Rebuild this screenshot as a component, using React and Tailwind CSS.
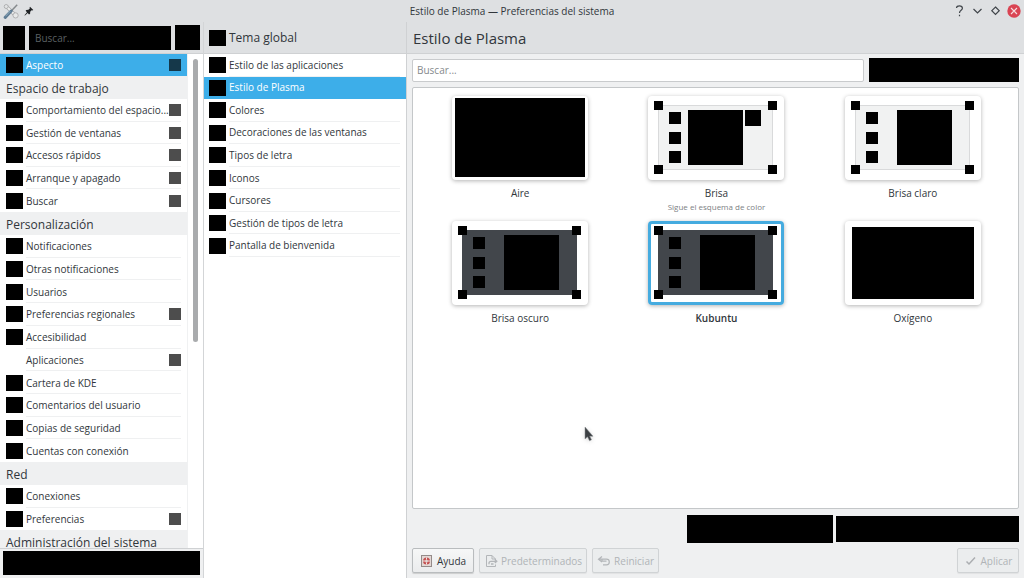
import React from "react";

const sections = [
  {
    title: "Espacio de trabajo",
    height: "h-[113px]",
    items: [
      { label: "Comportamiento del espacio...", more: true },
      { label: "Gestión de ventanas", more: true },
      { label: "Accesos rápidos", more: true },
      { label: "Arranque y apagado", more: true },
      { label: "Buscar", more: true },
    ],
  },
  {
    title: "Personalización",
    height: "h-[227px]",
    items: [
      { label: "Notificaciones" },
      { label: "Otras notificaciones" },
      { label: "Usuarios" },
      { label: "Preferencias regionales", more: true },
      { label: "Accesibilidad" },
      { label: "Aplicaciones", more: true, noIcon: true },
      { label: "Cartera de KDE" },
      { label: "Comentarios del usuario" },
      { label: "Copias de seguridad" },
      { label: "Cuentas con conexión" },
    ],
  },
  {
    title: "Red",
    height: "h-[45px]",
    items: [{ label: "Conexiones" }, { label: "Preferencias", more: true }],
  },
  { title: "Administración del sistema", height: "h-0", items: [] },
];

const pages = [
  "Estilo de las aplicaciones",
  "Estilo de Plasma",
  "Colores",
  "Decoraciones de las ventanas",
  "Tipos de letra",
  "Iconos",
  "Cursores",
  "Gestión de tipos de letra",
  "Pantalla de bienvenida",
];

const themes = [
  { name: "Aire", kind: "full" },
  { name: "Brisa", note: "Sigue el esquema de color", kind: "light", panelX: 40, clock: true },
  { name: "Brisa claro", kind: "light", panelX: 52 },
  { name: "Brisa oscuro", kind: "dark", panelX: 52 },
  { name: "Kubuntu", kind: "dark", panelX: 52, selected: true },
  { name: "Oxígeno", kind: "inset" },
];

function ItemButton({ label, more, noIcon, selected, last }) {
  return (
    <button
      type="button"
      className={`flex h-full w-full items-center pl-[6px] text-left ${
        selected ? "bg-[#3daee9] text-white" : "text-[#31363b]"
      }`}
    >
      <span className={`h-4 w-[17px] shrink-0 ${noIcon ? "" : "bg-black"}`} />
      <span
        className={`ml-[3px] mr-[6px] flex h-full min-w-0 flex-1 items-center border-b pt-px ${
          selected || last ? "border-transparent" : "border-[#eff0f1]"
        }`}
      >
        <span className="min-w-0 flex-1 whitespace-nowrap">{label}</span>
        {more && <span className={`size-3 shrink-0 ${selected ? "bg-[#15384a]" : "bg-[#4d4d4d]"}`} />}
      </span>
    </button>
  );
}

function Preview({ kind, panelX, clock }) {
  const dark = kind === "dark";
  return (
    <svg viewBox="0 0 136 84" className="block h-[84px] w-[136px]" shapeRendering="crispEdges" aria-hidden="true">
      {kind === "full" && <rect x="3" y="2" width="130" height="79" />}
      {kind === "inset" && <rect x="7" y="6" width="122" height="72" />}
      {(dark || kind === "light") && (
        <>
          <rect
            x="10.5"
            y="9.5"
            width="114"
            height="64"
            fill={dark ? "#42464b" : "#f1f2f2"}
            stroke={dark ? "#42464b" : "#d9dadb"}
          />
          <rect x="6" y="5" width="9" height="9" />
          <rect x="120" y="5" width="9" height="9" />
          <rect x="6" y="69" width="9" height="9" />
          <rect x="120" y="69" width="9" height="9" />
          <rect x="21" y="16" width="12" height="12" />
          <rect x="21" y="36" width="12" height="12" />
          <rect x="21" y="55" width="12" height="12" />
          <rect x={panelX} y="14" width="55" height="55" />
          {clock && <rect x="97" y="14" width="16" height="16" />}
        </>
      )}
    </svg>
  );
}

function ThemeCard({ name, note, selected, ...preview }) {
  return (
    <button type="button" aria-pressed={!!selected} className="flex h-[125px] flex-col items-center">
      <span
        className={`rounded-[4px] bg-white ${
          selected
            ? "shadow-[inset_0_0_0_3px_#45abdf,0_1px_4px_rgba(0,0,0,0.3)]"
            : "shadow-[0_1px_4px_rgba(0,0,0,0.3)]"
        }`}
      >
        <Preview {...preview} />
      </span>
      <span className={`mt-[5px] leading-4 ${selected ? "font-semibold" : ""}`}>{name}</span>
      {note && <span className="text-[8px] leading-3 text-[#7d8184]">{note}</span>}
    </button>
  );
}

function ActionButton({ icon, children, disabled }) {
  return (
    <button
      type="button"
      disabled={disabled}
      className={`flex h-[25px] min-w-[62px] items-center justify-center gap-[3px] rounded-[2px] border px-1 ${
        disabled
          ? "border-[#d0d3d5] bg-[#ebedee] text-[#b0b4b7] shadow-[0_1px_1px_rgba(0,0,0,0.06)]"
          : "border-[#b9bcbe] bg-linear-to-b from-[#f6f7f7] to-[#ebeced] shadow-[0_1px_1px_rgba(0,0,0,0.15)]"
      }`}
    >
      {icon}
      {children}
    </button>
  );
}

const HelpIcon = (
  <svg viewBox="0 0 14 14" className="size-[14px]" aria-hidden="true">
    <rect x="1.5" y="1.5" width="10" height="11" fill="#e3d8d5" stroke="#948b89" />
    <circle cx="6.5" cy="7" r="2.5" fill="none" stroke="#c45050" strokeWidth="2" />
    <path d="M6.500 3.500v2M6.500 8.500v2M3 7h2M8 7h2" stroke="#f3e8e6" strokeWidth="1" />
  </svg>
);
const DefaultsIcon = (
  <svg viewBox="0 0 14 14" className="size-[14px]" fill="none" stroke="#b3b6b9" aria-hidden="true">
    <path d="M5 12.500H2.500v-11h5.500l3.500 3.500v1M8 1.500V5h3.500M5 12.500h6.500v-2" />
    <path d="M5 10.200V9.300a2 2 0 0 1 2-2h5.500M10.800 5.500l2 1.800-2 1.800M7 10h2.500" strokeWidth="1.3" />
  </svg>
);
const UndoIcon = (
  <svg viewBox="0 0 14 14" className="size-[14px]" fill="none" stroke="#b3b6b9" strokeWidth="1.2" aria-hidden="true">
    <path d="M5 2.500 1.500 5.200 5 8M2 5.200h7.500a2.800 2.800 0 0 1 0 5.600H6M5 5.200v2h4.500" />
  </svg>
);
const CheckIcon = (
  <svg viewBox="0 0 14 14" className="size-[14px]" fill="none" stroke="#abaeb1" strokeWidth="1.5" aria-hidden="true">
    <path d="m2.500 7.500 2.500 2.500 6-6.500" />
  </svg>
);

function TitleBar() {
  return (
    <header className="grid h-[22px] shrink-0 grid-cols-[1fr_auto_1fr] items-center pl-[3px] pr-[3px]">
      <div className="flex items-center gap-[5px]">
        <svg viewBox="0 0 16 16" className="size-4" aria-hidden="true">
          <path d="m3.500 3.500 9 9" stroke="#a4a6a7" strokeWidth="3.4" strokeLinecap="round" />
          <path d="m3.500 3.500 9 9" stroke="#eceded" strokeWidth="2" strokeLinecap="round" />
          <circle cx="3.2" cy="3.5" r="2" fill="#e1e3e4" stroke="#a4a6a7" strokeWidth=".8" />
          <circle cx="12.6" cy="12.4" r="2.6" fill="#e8e9e9" stroke="#a4a6a7" strokeWidth=".8" />
          <path d="M14.200 1.800 8 8.300" stroke="#85898c" strokeWidth="1.5" />
          <path d="m8.200 8-6 6.400" stroke="#5e7b93" strokeWidth="3" strokeLinecap="round" />
          <path d="m7.300 8.200-4.800 5" stroke="#9db7c8" strokeWidth=".8" />
        </svg>
        <svg viewBox="0 0 10 10" className="size-[10px]" aria-hidden="true">
          <path
            d="M6 .8 9.300 4l-1 .4-.8-.1-1.300 1.500-.1 2L5 8.400 3.700 7 1 9.400.5 9.500l.2-.6L3 6.200 1.600 4.800l.8-.8 2-.2 1.400-1.300-.2-1z"
            fill="#202326"
          />
        </svg>
      </div>
      <h1 className="leading-4">Estilo de Plasma — Preferencias del sistema</h1>
      <div className="flex items-center justify-end gap-1 text-[#40454a]">
        <button type="button" aria-label="Ayuda contextual">
          <svg viewBox="0 0 14 14" className="size-[14px]" fill="none" stroke="currentColor" strokeWidth="1.2">
            <path d="M3.500 4C3.500 2.500 4.700 1.800 6.400 1.800s3 .8 3 2.500C9.400 6.400 6.500 6.300 6.500 9M6.500 10.800v1.400" />
          </svg>
        </button>
        <button type="button" aria-label="Minimizar">
          <svg viewBox="0 0 14 14" className="size-[14px]" fill="none" stroke="currentColor" strokeWidth="1.2">
            <path d="m2.500 5 4 4 4-4" />
          </svg>
        </button>
        <button type="button" aria-label="Restaurar">
          <svg viewBox="0 0 14 14" className="size-[14px]" fill="none" stroke="currentColor" strokeWidth="1.2">
            <path d="m6.500 3 3.700 3.700-3.700 3.700-3.700-3.700z" />
          </svg>
        </button>
        <button type="button" aria-label="Cerrar">
          <svg viewBox="0 0 14 14" className="size-[14px]">
            <circle cx="7" cy="7" r="6.7" fill="#da4453" />
            <path d="m4 4 6 6m0-6-6 6" stroke="#f6dfe1" strokeWidth="1.1" />
          </svg>
        </button>
      </div>
    </header>
  );
}

export default function App() {
  return (
    <div className="flex h-screen flex-col overflow-hidden bg-[#dee0e2] font-['Open_Sans','Noto_Sans',sans-serif] text-[10px] leading-4 text-[#31363b]">
      <TitleBar />
      <div className="flex min-h-0 flex-1">
        <aside className="flex w-[204px] shrink-0 flex-col border-r border-[#d3d5d7]">
          <div className="flex h-8 shrink-0 items-center gap-1 border-b border-[#cfd1d3] pl-[3px] pr-[3px]">
            <button type="button" aria-label="Menú" className="h-6 w-[22px] bg-black" />
            <input
              aria-label="Buscar preferencias"
              placeholder="Buscar..."
              className="h-6 min-w-0 flex-1 bg-black px-[6px] text-white outline-none placeholder:text-[#5b6063]"
            />
            <button type="button" aria-label="Opciones" className="h-[25px] w-[25px] bg-black" />
          </div>
          <nav className="flex min-h-0 flex-1 bg-white">
            <div className="min-w-0 flex-1 overflow-x-hidden overflow-y-auto border-r border-[#f0f1f2] [scrollbar-width:none]">
              <div className="h-[22px]">
                <ItemButton label="Aspecto" more selected />
              </div>
              {sections.map((s) => (
                <section key={s.title}>
                  <h2 className="h-[23px] bg-[#eff0f1] pl-[6px] text-[12px] leading-[26px]">{s.title}</h2>
                  <ul className={`grid auto-rows-fr grid-cols-1 ${s.height}`}>
                    {s.items.map((it, i) => (
                      <li key={it.label} className="min-h-0 min-w-0">
                        <ItemButton {...it} last={i === s.items.length - 1} />
                      </li>
                    ))}
                  </ul>
                </section>
              ))}
            </div>
            <div className="w-[15px] pl-[5px] pt-[5px]">
              <div className="h-[283px] w-[5px] rounded-full bg-[#a9abad]" />
            </div>
          </nav>
          <div className="flex h-[30px] shrink-0 border-t border-[#cfd1d3] bg-[#eff0f1] p-[3px] pt-[2px]">
            <div className="h-6 flex-1 bg-black" />
          </div>
        </aside>

        <section className="flex w-[203px] shrink-0 flex-col border-r border-[#cfd1d3] bg-white">
          <button
            type="button"
            className="flex h-8 shrink-0 items-center gap-[3px] border-b border-[#cfd1d3] bg-[#dee0e2] pl-[5px] pt-px text-left text-[12px]"
          >
            <span className="h-4 w-[17px] bg-black" />
            Tema global
          </button>
          <ul className="grid h-[203px] auto-rows-fr">
            {pages.map((p) => {
              const selected = p === "Estilo de Plasma";
              return (
                <li key={p} className="min-h-0">
                  <button
                    type="button"
                    className={`flex h-full w-full items-center pl-[5px] pr-[6px] text-left ${
                      selected ? "bg-[#3daee9] text-white" : ""
                    }`}
                  >
                    <span className="h-4 w-[17px] shrink-0 bg-black" />
                    <span
                      className={`ml-[3px] flex h-full flex-1 items-center border-b ${
                        selected ? "border-transparent" : "border-[#eff0f1]"
                      }`}
                    >
                      {p}
                    </span>
                  </button>
                </li>
              );
            })}
          </ul>
        </section>

        <main className="flex min-w-0 flex-1 flex-col bg-[#eff0f1]">
          <h2 className="h-8 shrink-0 border-b border-[#cfd1d3] bg-[#dee0e2] pl-[6px] text-[15px] leading-8">
            Estilo de Plasma
          </h2>
          <div className="flex min-h-0 flex-1 flex-col px-[5px] pb-[5px] pt-1">
            <div className="flex shrink-0 items-center gap-[5px]">
              <input
                aria-label="Buscar estilos"
                placeholder="Buscar..."
                className="h-[23px] min-w-0 flex-1 rounded-[2px] border border-[#c9cbcd] bg-white px-1 outline-none placeholder:text-[#85898c]"
              />
              <button type="button" aria-label="Filtro" className="h-6 w-[150px] bg-black" />
            </div>
            <div className="relative mt-[5px] min-h-0 flex-1 rounded-[2px] border border-[#c4c7c9] bg-white pl-[9px] pr-[7px] pt-2">
              <div className="grid grid-cols-3 justify-items-center">
                {themes.map((t) => (
                  <ThemeCard key={t.name} {...t} />
                ))}
              </div>
              <svg
                viewBox="0 0 10 16"
                className="absolute left-[171px] top-[338px] h-4 w-[10px] drop-shadow-sm"
                aria-hidden="true"
              >
                <path d="M1 1v12l2.500-2.200 2 4 2-1-1.800-3.600H9z" fill="#3c4043" stroke="#85898c" strokeWidth=".5" />
              </svg>
            </div>
            <div className="mt-[6px] flex h-7 shrink-0 items-center justify-end gap-[3px]">
              <button type="button" aria-label="Obtener de archivo" className="h-7 w-[146px] bg-black" />
              <button type="button" aria-label="Obtener nuevos" className="h-[26px] w-[183px] bg-black" />
            </div>
            <footer className="mt-[5px] flex shrink-0 items-center gap-[5px]">
              <ActionButton icon={HelpIcon}>Ayuda</ActionButton>
              <ActionButton icon={DefaultsIcon} disabled>Predeterminados</ActionButton>
              <ActionButton icon={UndoIcon} disabled>Reiniciar</ActionButton>
              <span className="flex-1" />
              <ActionButton icon={CheckIcon} disabled>Aplicar</ActionButton>
            </footer>
          </div>
        </main>
      </div>
    </div>
  );
}
